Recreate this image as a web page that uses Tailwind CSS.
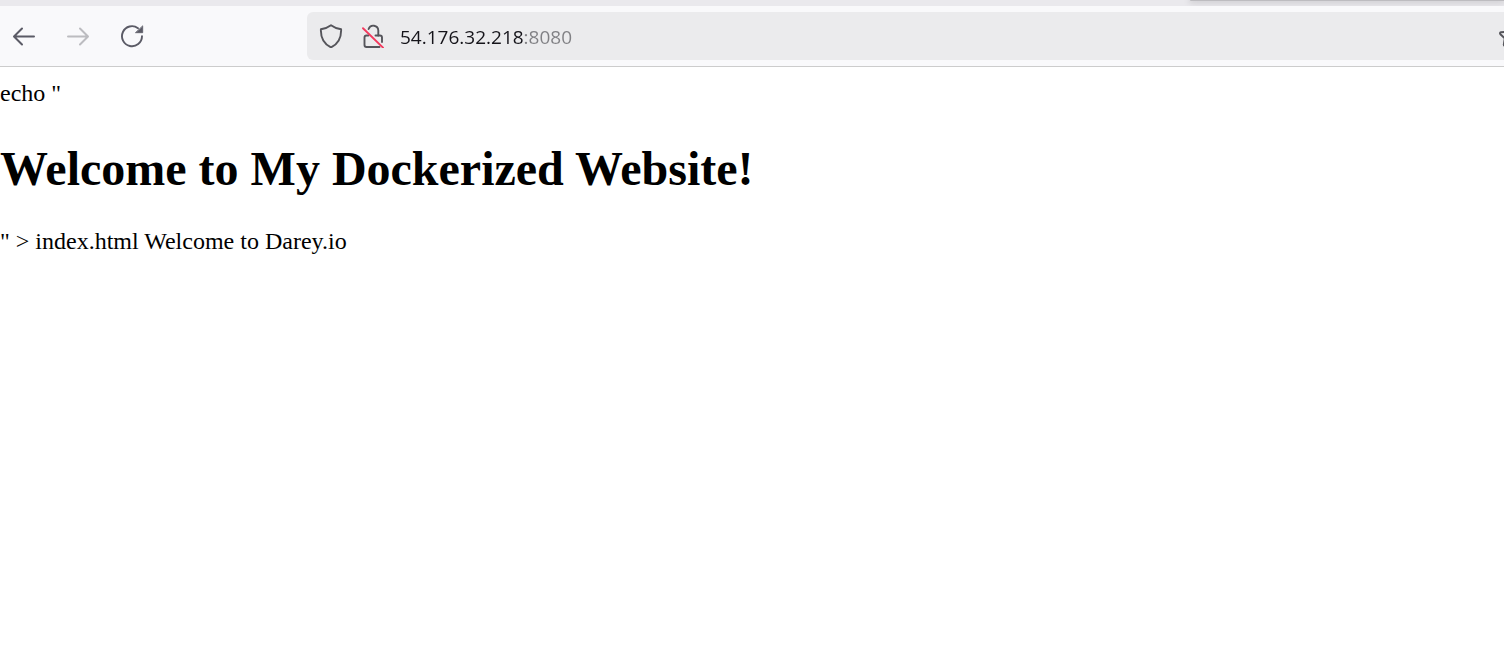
<!DOCTYPE html>
<html lang="en">
<head>
<meta charset="utf-8">
<title>54.176.32.218:8080</title>
<script src="https://cdn.jsdelivr.net/npm/@tailwindcss/browser@4"></script>
</head>
<body class="min-h-screen overflow-x-hidden bg-white text-black">
<header class="border-b border-[#cccccc] bg-[#f9f9fb]">
  <div class="flex h-[6px] justify-end overflow-hidden bg-[#eae9ed]">
    <div class="h-px w-[314px] rounded-bl bg-[#bdbcc0] shadow-[0_0_6px_1px_rgba(0,0,0,0.22)]"></div>
  </div>
  <div class="flex h-[60px] items-center overflow-hidden">
    <nav class="flex w-[307px] shrink-0 items-center gap-[6px]" aria-label="Navigation">
      <button type="button" aria-label="Back" class="flex size-12 items-center justify-center text-[#5b5b66]">
        <svg class="size-6" viewBox="0 0 24 24" fill="none" stroke="currentColor" stroke-width="2" stroke-linecap="round" stroke-linejoin="round"><path d="M22 12.500H2.500M10 4.500l-8 8 8 8"/></svg>
      </button>
      <button type="button" aria-label="Forward" disabled class="flex size-12 items-center justify-center text-[#bcbcc0]">
        <svg class="size-6" viewBox="0 0 24 24" fill="none" stroke="currentColor" stroke-width="2" stroke-linecap="round" stroke-linejoin="round"><path d="M2 12.500H21.500M14 4.500l8 8-8 8"/></svg>
      </button>
      <button type="button" aria-label="Reload" class="flex size-12 items-center justify-center text-[#5b5b66]">
        <svg class="size-6" viewBox="0 0 24 24" fill="none" stroke="currentColor" stroke-width="1.900" stroke-linecap="round"><path d="M22 12.300A10 10 0 1 1 18 4.200"/><path d="M22.700 2.200v6.500h-6.900z" fill="currentColor" stroke="currentColor" stroke-width="0.800" stroke-linejoin="round"/></svg>
      </button>
    </nav>
    <div class="flex h-12 min-w-0 flex-1 items-center overflow-hidden rounded-l-md bg-[#ebebed] pl-3">
      <button type="button" aria-label="Tracking protection" class="shrink-0 text-[#55555b]">
        <svg class="size-6" viewBox="0 0 24 24" fill="none" stroke="currentColor" stroke-width="1.900" stroke-linejoin="round"><path d="M12 1.200C9 3.500 5.500 4.600 1.900 5.300C1.600 13 4 19.500 12 23.400C20 19.500 22.400 13 22.100 5.300C18.500 4.600 15 3.500 12 1.200Z"/></svg>
      </button>
      <button type="button" aria-label="Connection is not secure" class="ml-[18px] shrink-0 text-[#55555b]">
        <svg class="size-6" viewBox="0 0 24 24" fill="none" stroke-linecap="round"><g stroke="currentColor" stroke-width="1.900"><path d="M7.600 5A5 5 0 0 1 17.300 6.500V11.500"/><path d="M14.500 11.500H19a2 2 0 0 1 2 2V18"/><path d="M7.500 11.500H5.500a2 2 0 0 0-2 2V21a2 2 0 0 0 2 2H18.500"/></g><path d="M2 4.200L22 23.600" stroke="#f3395e" stroke-width="1.900"/></svg>
      </button>
      <input type="text" aria-label="Address" value="54.176.32.218:8080" spellcheck="false" class="ml-[15px] h-8 min-w-0 flex-1 bg-linear-to-r from-[#15141a] from-[125px] to-[#808084] to-[125px] bg-clip-text pt-0.5 font-['Open_Sans',sans-serif] text-[19px] leading-8 text-transparent caret-black outline-none">
      <button type="button" aria-label="Bookmark this page" class="-mr-[18px] shrink-0 text-[#55555b]">
        <svg class="size-6" viewBox="0 0 24 24" fill="none" stroke="currentColor" stroke-width="2" stroke-linejoin="round"><path d="M12 1.500L9 7.500l-6 .800q-1.600.500-.600 1.900L6.800 14.400l-1 6.300q.100 1.300 1.400.800L12 18.800l4.800 2.700q1.300.500 1.400-.800l-1-6.300 4.400-4.200q1-1.400-.600-1.900l-6-.800z"/></svg>
      </button>
    </div>
  </div>
</header>
<main class="pt-3 font-['Liberation_Serif',serif] text-2xl leading-7">
  <p>echo "</p>
  <h1 class="mt-[34px] mb-[30px] text-5xl leading-14 font-bold">Welcome to My Dockerized Website!</h1>
  <p>" &gt; index.html Welcome to Darey.io</p>
</main>
</body>
</html>
